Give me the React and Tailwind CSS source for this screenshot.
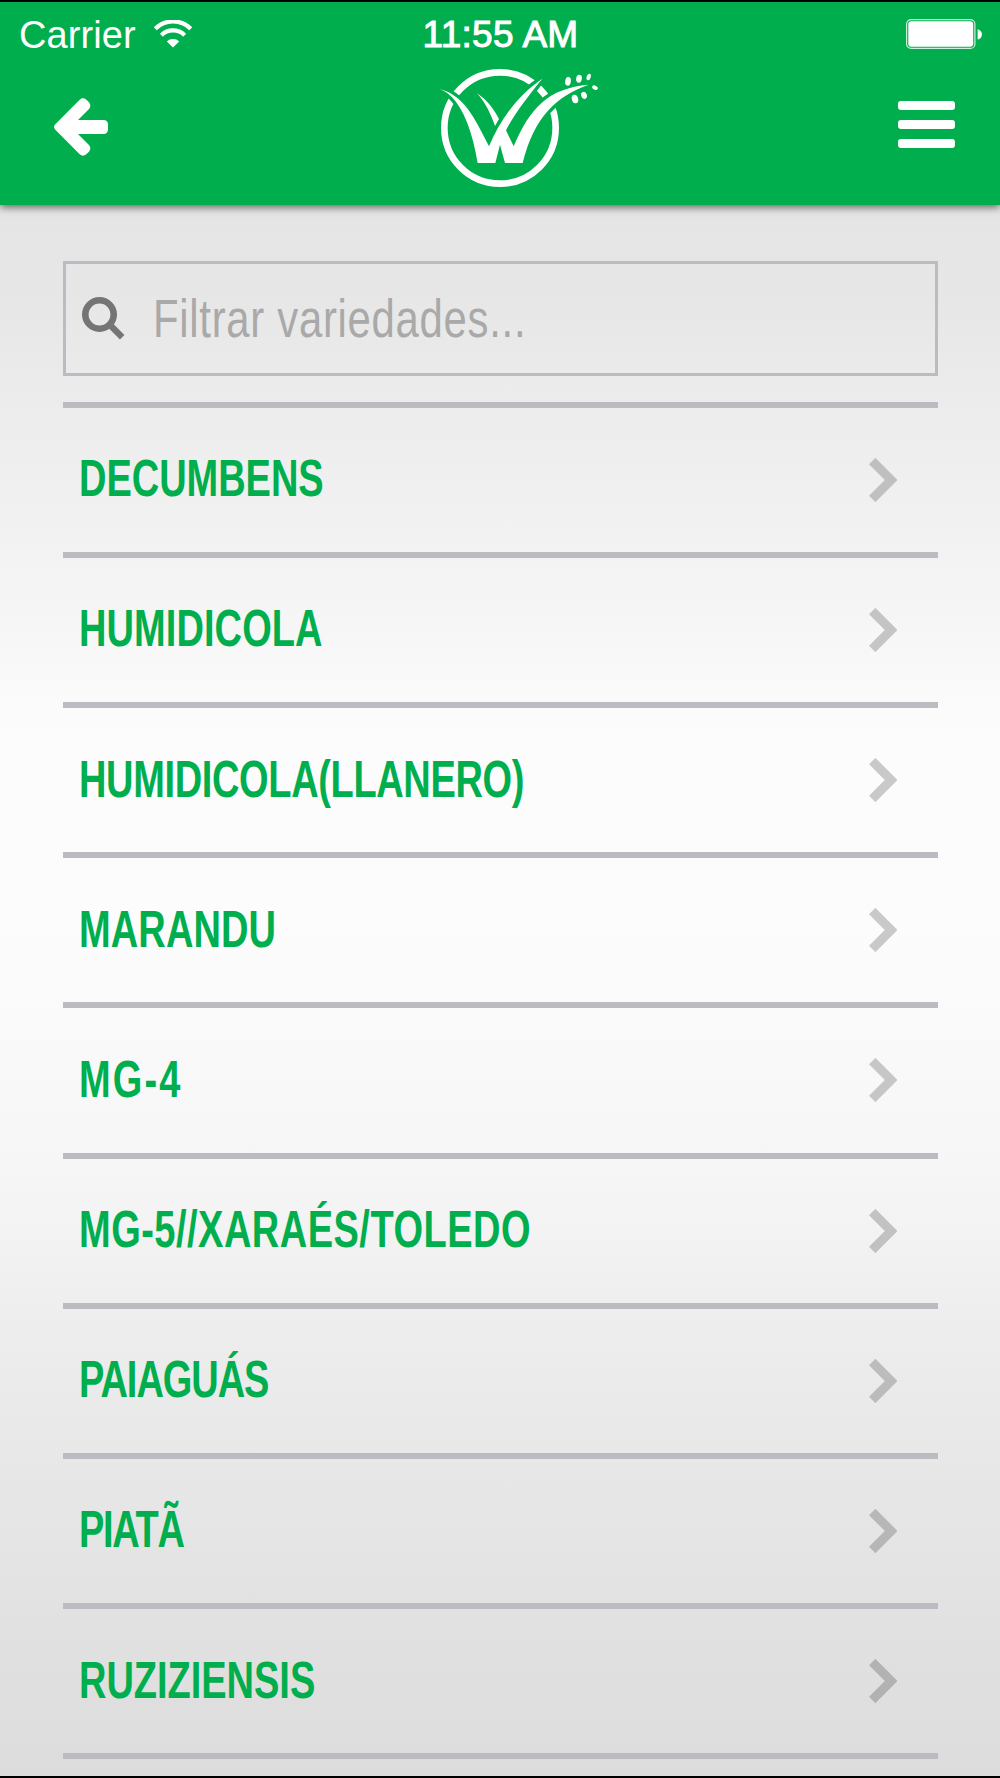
const ITEMS = [
  { name: "DECUMBENS", tracking: "tracking-normal" },
  { name: "HUMIDICOLA", tracking: "tracking-[0.15px]" },
  { name: "HUMIDICOLA(LLANERO)", tracking: "tracking-[-0.45px]" },
  { name: "MARANDU", tracking: "tracking-[0.2px]" },
  { name: "MG-4", tracking: "tracking-[3px]" },
  { name: "MG-5//XARAÉS/TOLEDO", tracking: "tracking-[0.7px]" },
  { name: "PAIAGUÁS", tracking: "tracking-[-1.4px]" },
  { name: "PIATÃ", tracking: "tracking-[-1.8px]" },
  { name: "RUZIZIENSIS", tracking: "tracking-normal" },
];

function WifiIcon() {
  return (
    <svg viewBox="0 0 38 28" className="w-[38px] h-7" fill="none" stroke="#fff">
      <path d="M1.2 8.8A25.2 25.2 0 0 1 36.8 8.8" strokeWidth="4.2" />
      <path d="M7.3 15.2A16.6 16.6 0 0 1 30.7 15.2" strokeWidth="4.2" />
      <path d="M12.8 21.4A9 9 0 0 1 25.2 21.4L19 27.5Z" fill="#fff" stroke="none" />
    </svg>
  );
}

function BatteryIcon() {
  return (
    <svg viewBox="0 0 76 30" className="w-[76px] h-[30px]" fill="none">
      <rect x="0.6" y="0.6" width="68.3" height="28.8" rx="4.5" stroke="#fff" strokeOpacity="0.8" strokeWidth="1.2" />
      <rect x="2.3" y="2.3" width="64.9" height="25.4" rx="3" fill="#fff" />
      <path d="M71.6 10.2Q75.9 11.4 75.9 15.4T71.6 20.6Z" fill="#fff" />
    </svg>
  );
}

function BackIcon() {
  return (
    <svg viewBox="0 0 162 174" className="w-[54px] h-[58px]" fill="#fff">
      <path d="M4 79L77 5Q87-3 97 5L105 13Q113 23 105 33L72 66H148Q162 66 162 80V94Q162 108 148 108H72L105 141Q113 151 105 161L97 169Q87 177 77 169L4 95Q-4 87 4 79Z" />
    </svg>
  );
}

function Logo() {
  return (
    <svg viewBox="117 205 480 360" className="w-40 h-[120px]">
      <circle cx="300" cy="385" r="167" fill="none" stroke="#fff" strokeWidth="20" />
      {/* The green outline cuts the gaps in the ring */}
      <g fill="#fff" stroke="#00ae4d" strokeWidth="20" paintOrder="stroke">
        <path d="M117 268C190 285 222 350 267 440C300 360 355 285 427 237C380 295 345 340 318 392L341 440C390 325 445 265 566 255C470 289 403 350 368 490H315L300 435L286 490H233C222 420 190 290 117 268Z" />
      </g>
      <path d="M231 281C265 303 284 334 297 358L285 379C273 345 256 307 231 281Z" fill="#fff" />
      <g fill="#fff">
        <ellipse cx="504" cy="245" rx="8.5" ry="13" transform="rotate(8 504 245)" />
        <ellipse cx="537" cy="237" rx="8.5" ry="12" transform="rotate(8 537 237)" />
        <ellipse cx="566" cy="232" rx="6" ry="10" transform="rotate(20 566 232)" />
        <ellipse cx="585" cy="264" rx="9" ry="6" transform="rotate(28 585 264)" />
        <ellipse cx="525" cy="298" rx="9.5" ry="13" transform="rotate(-15 525 298)" />
        <ellipse cx="552" cy="287" rx="8.5" ry="11" transform="rotate(-20 552 287)" />
      </g>
    </svg>
  );
}

function MenuIcon() {
  return (
    <div className="flex flex-col gap-[9.5px] w-[57px]">
      <span className="h-[9.4px] rounded-[3px] bg-white" />
      <span className="h-[9.4px] rounded-[3px] bg-white" />
      <span className="h-[9.4px] rounded-[3px] bg-white" />
    </div>
  );
}

function SearchIcon() {
  return (
    <svg viewBox="0 0 43 43" className="w-[43px] h-[43px] shrink-0" fill="none" stroke="#757575">
      <circle cx="17.5" cy="17.5" r="14.2" strokeWidth="6.6" />
      <path d="M27.5 27.5L40.2 40.2" strokeWidth="6.4" />
    </svg>
  );
}

function Chevron() {
  return (
    <svg viewBox="0 0 28 44" className="w-7 h-11 shrink-0" fill="none" stroke="#000" strokeOpacity="0.2">
      <path d="M3.2 3L22.2 22L3.2 41" strokeWidth="9" />
    </svg>
  );
}

function Header() {
  return (
    <header className="relative h-[202.5px] shrink-0 bg-[#00ae4d] text-white shadow-[0_2px_8px_rgba(0,0,0,0.6)]">
      <div className="grid grid-cols-3 items-center h-[63px] pl-[19px] pr-[18px]">
        <div className="flex items-center gap-[18px]">
          <span className="pt-0.5 text-[38px] leading-none tracking-[0.1px]">Carrier</span>
          <WifiIcon />
        </div>
        <span className="pt-0.5 text-center text-[37px] leading-none tracking-[0.3px] [-webkit-text-stroke:1px_#fff]">
          11:55 AM
        </span>
        <div className="flex justify-end">
          <BatteryIcon />
        </div>
      </div>
      <div className="flex justify-between items-start pl-[54px] pr-[45px]">
        <div className="w-[385px] pt-[33px]">
          <BackIcon />
        </div>
        <div className="pt-[3px]">
          <Logo />
        </div>
        <div className="flex-1 flex justify-end pt-[36px]">
          <MenuIcon />
        </div>
      </div>
    </header>
  );
}

export default function App() {
  return (
    <div className="flex flex-col h-[1778px] w-[1000px] overflow-hidden border-y-2 border-black bg-[linear-gradient(to_bottom,#e4e4e4_11%,#e7e7e7_17%,#eeeeee_25%,#f4f4f4_33%,#fcfcfc_41%,#fcfcfc_52%,#f6f6f6_66%,#ececec_76%,#e1e1e1_92%,#dcdcdc_100%)] font-['Liberation_Sans',Arial,sans-serif]">
      <Header />
      <main className="px-[62.5px] pt-[56.2px]">
        <label className="flex items-center h-[115.3px] border-[3px] border-[#bbbcc1] pl-4">
          <SearchIcon />
          <span className="ml-[28px] origin-left scale-x-[0.79] whitespace-nowrap text-[53px] leading-none tracking-[0.9px] text-[#a9a9a9]">
            Filtrar variedades...
          </span>
        </label>
        <ul className="mt-[25.6px] border-t-[6px] border-[#bbbcc1]">
          {ITEMS.map(({ name, tracking }) => (
            <li
              key={name}
              className="flex items-center justify-between h-[150.2px] border-b-[6px] border-[#bbbcc1] pl-4 pr-[41px]"
            >
              <span
                className={`pb-[3px] origin-left scale-x-[0.73] whitespace-nowrap text-[52px] leading-none font-bold text-[#00ae4d] ${tracking}`}
              >
                {name}
              </span>
              <Chevron />
            </li>
          ))}
        </ul>
      </main>
    </div>
  );
}
